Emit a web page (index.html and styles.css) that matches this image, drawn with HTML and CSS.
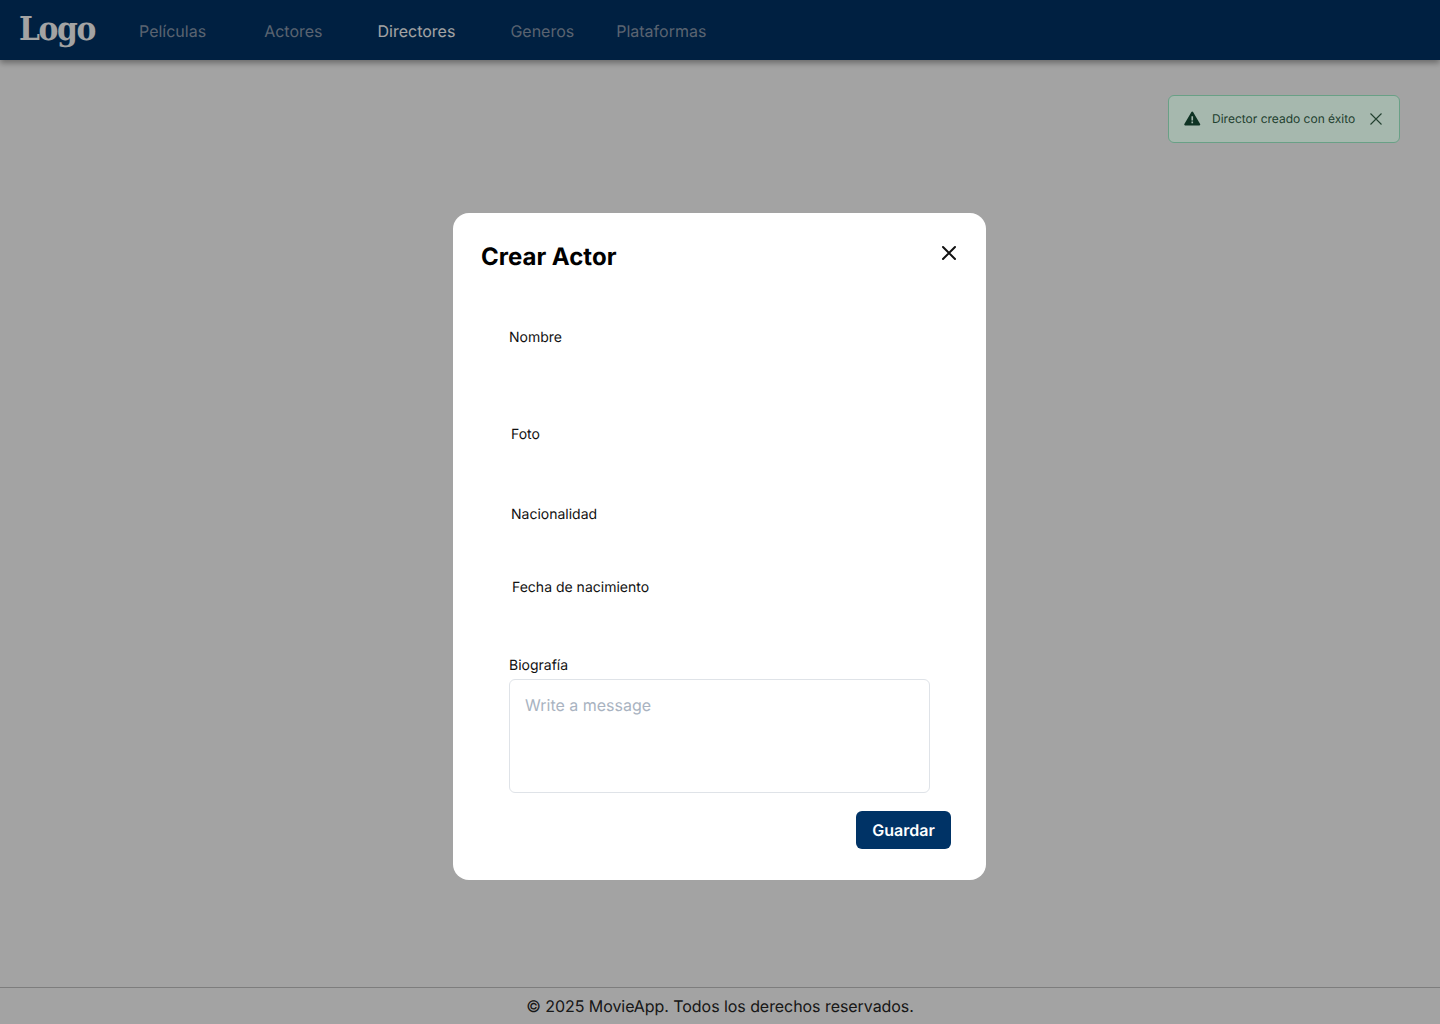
FILE: index.html
```html
<!DOCTYPE html>
<html lang="es">
<head>
    <meta charset="UTF-8">
    <meta name="viewport" content="width=device-width, initial-scale=1.0">
    <title>MovieApp - Crear Actor</title>
    <link rel="stylesheet" href="styles.css">
</head>
<body>

<header class="navbar">
    <a class="logo" href="#">Logo</a>
    <nav class="nav-links">
        <a class="nav-link nav-peliculas" href="#">Películas</a>
        <a class="nav-link nav-actores" href="#">Actores</a>
        <a class="nav-link nav-directores active" href="#">Directores</a>
        <a class="nav-link nav-generos" href="#">Generos</a>
        <a class="nav-link nav-plataformas" href="#">Plataformas</a>
    </nav>
</header>

<main class="page-content"></main>

<footer class="footer">© 2025 MovieApp. Todos los derechos reservados.</footer>

<div class="overlay">
    <section class="modal">
        <div class="modal-header">
            <h2 class="modal-title">Crear Actor</h2>
            <button class="modal-close" aria-label="Cerrar">
                <svg width="24" height="24" viewBox="0 0 24 24" fill="none" stroke="#111" stroke-width="2" stroke-linecap="round">
                    <path d="M6 6 18 18M18 6 6 18"/>
                </svg>
            </button>
        </div>
        <form class="actor-form">
            <div class="field field-nombre"><label>Nombre</label></div>
            <div class="field field-foto"><label>Foto</label></div>
            <div class="field field-nacionalidad"><label>Nacionalidad</label></div>
            <div class="field field-fecha"><label>Fecha de nacimiento</label></div>
            <div class="field field-biografia">
                <label for="bio">Biografía</label>
                <textarea id="bio" placeholder="Write a message"></textarea>
            </div>
            <div class="form-actions">
                <button class="btn-save" type="button">Guardar</button>
            </div>
        </form>
    </section>
</div>

<div class="toast">
    <svg class="toast-icon" width="16.500" height="14.670" viewBox="0 0 18 16">
        <path fill="#0f3324" fill-rule="evenodd" d="M9 .6c.4 0 .7.2.9.5l7.7 13.2c.4.7-.1 1.5-.9 1.5H1.3c-.8 0-1.3-.8-.9-1.5L8.100 1.100c.2-.3.5-.5.9-.5ZM8.100 5.600v4.700h1.800V5.600H8.100Zm0 5.900v1.800h1.800v-1.800H8.100Z"/>
    </svg>
    <span class="toast-text">Director creado con éxito</span>
    <svg class="toast-close" width="14" height="14" viewBox="0 0 14 14" fill="none" stroke="#22402f" stroke-width="1.100">
        <path d="M1.500 1.500 12.500 12.500M12.500 1.500 1.500 12.500"/>
    </svg>
</div>

</body>
</html>
```

FILE: styles.css
```css
* {
    box-sizing: border-box;
}

html, body {
    height: 100%;
}

body {
    font-family: Inter, "Liberation Sans", sans-serif;
    margin: 0;
    min-height: 1024px;
    display: flex;
    flex-direction: column;
    background-color: #ffffff;
    color: #111;
    text-rendering: geometricPrecision;
}

.navbar {
    height: 60px;
    flex-shrink: 0;
    display: flex;
    align-items: center;
    padding-left: 20px;
    background-color: #003366;
    box-shadow: 0 3px 6px rgba(0, 0, 0, 0.35);
}

.logo {
    width: 119px;
    margin-top: -3px;
    font-family: "DejaVu Serif Condensed", "DejaVu Serif", serif;
    font-size: 33px;
    font-weight: 700;
    letter-spacing: -1.300px;
    text-indent: -1px;
    color: #ffffff;
    text-decoration: none;
}

.nav-links {
    display: flex;
    margin-top: 2px;
}

.nav-link {
    font-size: 16px;
    line-height: 24px;
    color: #8d9cb0;
    text-decoration: none;
}

.nav-link.active {
    color: #ffffff;
}

.nav-peliculas { margin-right: 58px; }
.nav-actores { margin-right: 55px; }
.nav-directores { margin-right: 55px; }
.nav-generos { margin-right: 42px; }

.page-content {
    flex: 1;
}

.footer {
    height: 37px;
    flex-shrink: 0;
    border-top: 1px solid #c4c4c4;
    font-size: 16px;
    line-height: 37px;
    letter-spacing: -0.06px;
    text-align: center;
    color: #262626;
}

.overlay {
    position: fixed;
    top: 0;
    left: 0;
    width: 100%;
    height: 100%;
    padding: 213px 0 0 453px;
    background-color: rgba(0, 0, 0, 0.36);
}

.modal {
    width: 533px;
    height: 667px;
    padding: 28px;
    background-color: #ffffff;
    border-radius: 16px;
}

.modal-header {
    display: flex;
    justify-content: space-between;
    align-items: flex-start;
}

.modal-title {
    margin: 0;
    font-size: 24px;
    line-height: 32px;
    font-weight: 700;
    color: #000;
}

.modal-close {
    padding: 0;
    margin: 0 -3px 0 0;
    border: none;
    background: none;
    line-height: 0;
}

.actor-form {
    padding-left: 28px;
}

.field label {
    display: block;
    font-size: 14px;
    line-height: 20px;
    color: #111;
}

.field-nombre { margin-top: 55px; }
.field-foto { margin-top: 77px; padding-left: 2px; }
.field-nacionalidad { margin-top: 60px; padding-left: 2px; }
.field-fecha { margin-top: 53px; padding-left: 3px; }
.field-biografia { margin-top: 58px; }

.field textarea {
    display: block;
    width: 421px;
    height: 114px;
    margin-top: 3px;
    padding: 14px 15px;
    border: 1px solid #dfe3e8;
    border-radius: 6px;
    font-family: inherit;
    font-size: 16px;
    line-height: 22px;
    text-rendering: geometricPrecision;
    resize: none;
}

.field textarea::placeholder {
    color: #a9b3c1;
}

.form-actions {
    display: flex;
    justify-content: flex-end;
    margin: 18px 7px 0 0;
}

.btn-save {
    width: 95px;
    height: 38px;
    border: none;
    border-radius: 6px;
    background-color: #003366;
    color: #ffffff;
    font-family: inherit;
    font-size: 16px;
    font-weight: 600;
    text-rendering: geometricPrecision;
}

.toast {
    position: absolute;
    top: 95px;
    left: 1168px;
    width: 232px;
    height: 48px;
    display: flex;
    align-items: center;
    padding: 0 0 1px 15px;
    background-color: #a6b8ae;
    border: 1px solid #69a086;
    border-radius: 6px;
    color: #22402f;
}

.toast-icon {
    flex-shrink: 0;
}

.toast-text {
    margin-left: 11.500px;
    font-size: 12px;
    white-space: nowrap;
}

.toast-close {
    flex-shrink: 0;
    margin-left: 14px;
}
```
